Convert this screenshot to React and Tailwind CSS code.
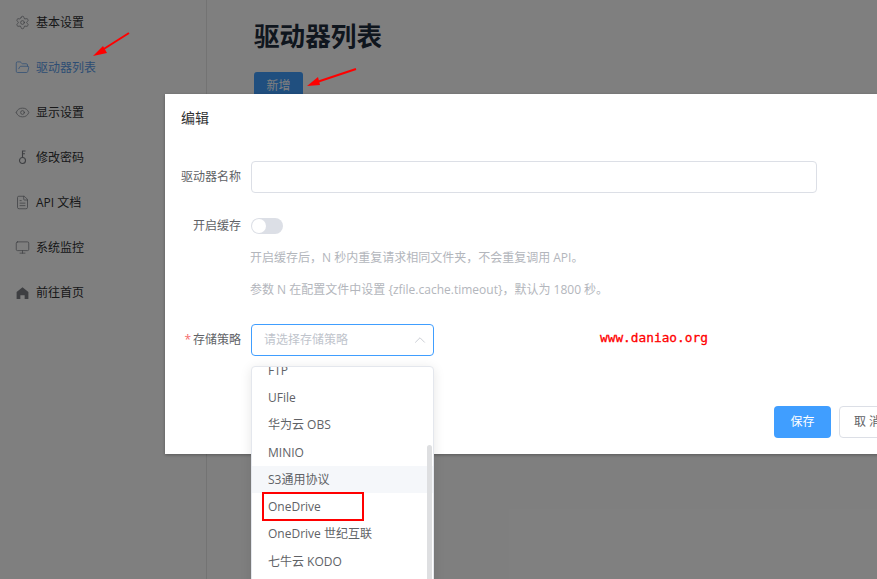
import { Settings, FolderOpen, Eye, FileText, Monitor, ChevronUp } from 'lucide-react'

const FONT = '[font-family:"Open_Sans","Noto_Sans_CJK_SC",sans-serif]'

function KeyIcon({ className }) {
  return (
    <svg className={className} viewBox="0 0 14 16" fill="none" stroke="currentColor" strokeWidth="1.2">
      <circle cx="7" cy="11.2" r="3.2" />
      <path d="M7 8V1H10.2M7 4H9.6" />
    </svg>
  )
}

function HomeIcon({ className }) {
  return (
    <svg className={className} viewBox="0 0 14 14" fill="currentColor">
      <path d="M7 2 12.5 6.5V13H9V9.5H5V13H1.5V6.5Z" />
    </svg>
  )
}

const menu = [
  { label: '基本设置', icon: Settings },
  { label: '驱动器列表', icon: FolderOpen, active: true },
  { label: '显示设置', icon: Eye },
  { label: '修改密码', icon: KeyIcon },
  { label: 'API 文档', icon: FileText },
  { label: '系统监控', icon: Monitor },
  { label: '前往首页', icon: HomeIcon },
]

const options = ['FTP', 'UFile', '华为云 OBS', 'MINIO', 'S3通用协议', 'OneDrive', 'OneDrive 世纪互联', '七牛云 KODO']

function Sidebar() {
  return (
    <aside className="w-[207px] shrink-0 border-r border-[#e6e6e6] bg-white">
      {menu.map(({ label, icon: Icon, active }) => (
        <div
          key={label}
          className={`flex h-[45px] items-center gap-[6px] pl-[15px] text-xs ${active ? 'text-[#5b9be8]' : 'text-[#303133]'}`}
        >
          <span className={`flex w-[15px] justify-center ${active ? 'text-[#5b9be8]' : 'text-[#7c7f85]'}`}>
            <Icon className="size-[15px]" strokeWidth={1.2} />
          </span>
          {label}
        </div>
      ))}
    </aside>
  )
}

function Dropdown() {
  return (
    <div className="absolute left-[-1px] top-[41px] h-[300px] w-[183px] overflow-hidden rounded-t border border-[#e4e7ed] bg-white shadow-[0_2px_12px_rgba(0,0,0,0.1)]">
      <div className="mt-[-10px] text-xs text-[#606266]">
        {options.map((name) => (
          <div
            key={name}
            className={`flex h-[27.3px] items-center pl-4 ${name === 'S3通用协议' ? 'bg-[#f5f7fa]' : ''}`}
          >
            {name}
          </div>
        ))}
      </div>
      <div className="absolute right-[1px] top-[78px] h-[150px] w-[5px] rounded-full bg-[#dedfe1]" />
    </div>
  )
}

function Dialog() {
  return (
    <div className={`absolute left-[165px] top-[94px] h-[360px] w-[800px] bg-white shadow-[0_1px_3px_rgba(0,0,0,0.3)] ${FONT}`}>
      <div className="pl-4 pt-[14px] text-[14px] leading-5 text-[#303133]">编辑</div>

      <div className="mt-[33px] flex items-center">
        <label className="w-[76px] text-right text-xs text-[#606266]">驱动器名称</label>
        <div className="ml-[10px] h-8 w-[566px] rounded border border-[#dcdfe6] bg-white" />
      </div>

      <div className="mt-6 flex h-[18px] items-center">
        <label className="w-[76px] text-right text-xs text-[#606266]">开启缓存</label>
        <div className="ml-[10px] flex h-4 w-8 items-center rounded-full bg-[#dcdfe6] pl-[1px]">
          <span className="size-[14px] rounded-full bg-white" />
        </div>
      </div>

      <div className="ml-[85px] mt-[13px] text-xs leading-5 text-[#b3b6bc]">
        <p>开启缓存后，N 秒内重复请求相同文件夹，不会重复调用 API。</p>
        <p className="mt-3">参数 N 在配置文件中设置 {'{zfile.cache.timeout}'}，默认为 1800 秒。</p>
      </div>

      <div className="mt-6 flex items-center">
        <label className="w-[76px] text-right text-xs text-[#606266]">
          <span className="mr-[2px] text-[#f56c6c]">*</span>存储策略
        </label>
        <div className="relative ml-[10px] flex h-8 w-[183px] items-center justify-between rounded border border-[#409eff] pl-3 pr-1 text-xs text-[#c0c4cc]">
          请选择存储策略
          <ChevronUp className="size-[18px]" strokeWidth={1.1} />
          <Dropdown />
        </div>
      </div>

      <div className="mt-[50px] flex gap-2 pl-[609px] text-xs">
        <button className="h-8 w-[57px] rounded bg-[#409eff] text-white">保存</button>
        <button className="h-8 w-[57px] rounded border border-[#dcdfe6] bg-white text-[#606266]">取 消</button>
      </div>
    </div>
  )
}

export default function App() {
  return (
    <div className={`relative flex h-screen overflow-hidden bg-white ${FONT}`}>
      <Sidebar />
      <main className="pl-[47px] pt-[19px]">
        <h1 className="text-[25.6px] font-bold leading-9 text-[#1f2d3d]">驱动器列表</h1>
        <button className="mt-[17px] h-[28px] w-[49px] rounded-[3px] bg-[#409eff] text-xs text-white">新增</button>
      </main>

      <div className="absolute inset-0 bg-black/50">
        <Dialog />
      </div>

      {/* annotations pasted on top of the screenshot */}
      <svg className="absolute left-0 top-0 size-full" viewBox="0 0 877 579" fill="none">
        <path d="M129 33 99 52" stroke="#ff0000" strokeWidth="2" />
        <path d="M93 56 103 46 107 53Z" fill="#ff0000" />
        <path d="M356 69 314 83" stroke="#ff0000" strokeWidth="2" />
        <path d="M307 86 318 77 320 85Z" fill="#ff0000" />
      </svg>
      <span className="absolute left-[600px] top-[330px] font-['DejaVu_Sans_Mono',monospace] text-[12.8px] leading-4 text-[#ff0000] [-webkit-text-stroke:0.3px_#ff0000]">
        www.daniao.org
      </span>
      <div className="absolute left-[262px] top-[492px] h-[29px] w-[102px] border-2 border-[#ff0000]" />
    </div>
  )
}
